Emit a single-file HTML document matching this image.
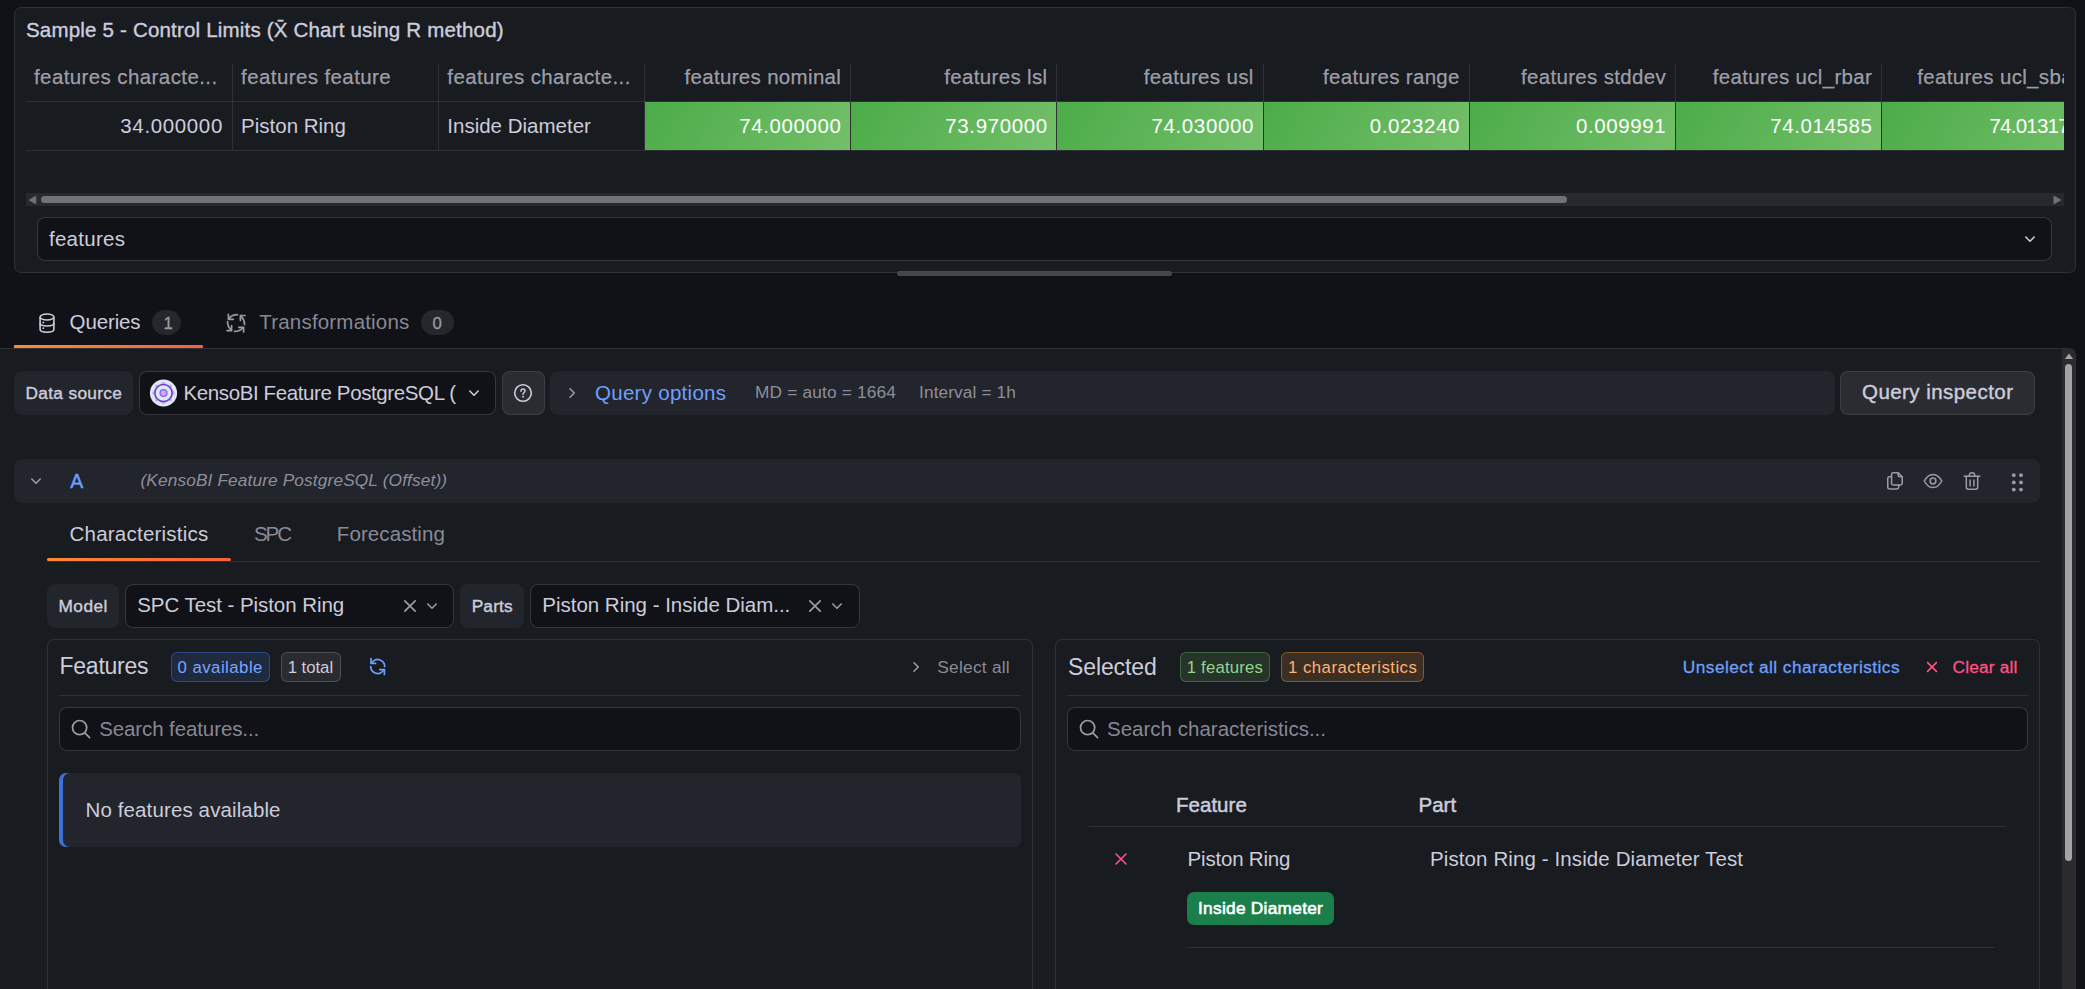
<!DOCTYPE html>
<html><head><meta charset="utf-8">
<style>
html,body{margin:0;padding:0;}
body{width:2085px;height:989px;overflow:hidden;background:#111217;position:relative;font-family:"Liberation Sans",sans-serif;}
.a{position:absolute;box-sizing:border-box;}
.t{position:absolute;white-space:nowrap;line-height:1;}
svg.a{overflow:visible;}
</style></head><body>
<div class="a" style="left:14px;top:7px;width:2062px;height:266px;background:#181b1f;box-shadow:inset 0 0 0 1px rgba(204,204,220,0.12);border-radius:7px;"></div>
<div class="t" style="top:20.00px;font-size:20.5px;color:#ccccdc;-webkit-text-stroke:0.4px #ccccdc;left:26.00px;letter-spacing:0.19px;">Sample 5 - Control Limits (X&#772; Chart using R method)</div>
<div class="a" style="left:26px;top:0px;width:2038px;height:160px;overflow:hidden">
<div class="a" style="left:0.00px;top:101px;width:2038.00px;height:1px;background:rgba(204,204,220,0.12);"></div>
<div class="a" style="left:0.00px;top:150px;width:2038.00px;height:1px;background:rgba(204,204,220,0.12);"></div>
<div class="a" style="left:619.00px;top:102px;width:205.00px;height:48px;background:linear-gradient(120deg,#4cac49,#73bf69);"></div>
<div class="a" style="left:825.00px;top:102px;width:205.00px;height:48px;background:linear-gradient(120deg,#4cac49,#73bf69);"></div>
<div class="a" style="left:1031.00px;top:102px;width:206.00px;height:48px;background:linear-gradient(120deg,#4cac49,#73bf69);"></div>
<div class="a" style="left:1238.00px;top:102px;width:205.00px;height:48px;background:linear-gradient(120deg,#4cac49,#73bf69);"></div>
<div class="a" style="left:1444.00px;top:102px;width:205.00px;height:48px;background:linear-gradient(120deg,#4cac49,#73bf69);"></div>
<div class="a" style="left:1650.00px;top:102px;width:205.00px;height:48px;background:linear-gradient(120deg,#4cac49,#73bf69);"></div>
<div class="a" style="left:1856.00px;top:102px;width:216.00px;height:48px;background:linear-gradient(120deg,#4cac49,#73bf69);"></div>
<div class="a" style="left:206.00px;top:63.5px;width:1.00px;height:86.5px;background:rgba(204,204,220,0.12);"></div>
<div class="a" style="left:412.00px;top:63.5px;width:1.00px;height:86.5px;background:rgba(204,204,220,0.12);"></div>
<div class="a" style="left:618.00px;top:63.5px;width:1.00px;height:86.5px;background:rgba(204,204,220,0.12);"></div>
<div class="a" style="left:824.00px;top:63.5px;width:1.00px;height:86.5px;background:rgba(204,204,220,0.12);"></div>
<div class="a" style="left:1030.00px;top:63.5px;width:1.00px;height:86.5px;background:rgba(204,204,220,0.12);"></div>
<div class="a" style="left:1237.00px;top:63.5px;width:1.00px;height:86.5px;background:rgba(204,204,220,0.12);"></div>
<div class="a" style="left:1443.00px;top:63.5px;width:1.00px;height:86.5px;background:rgba(204,204,220,0.12);"></div>
<div class="a" style="left:1649.00px;top:63.5px;width:1.00px;height:86.5px;background:rgba(204,204,220,0.12);"></div>
<div class="a" style="left:1855.00px;top:63.5px;width:1.00px;height:86.5px;background:rgba(204,204,220,0.12);"></div>
<div class="t" style="top:67.00px;font-size:20.5px;color:rgba(204,204,220,0.72);-webkit-text-stroke:0.25px rgba(204,204,220,0.72);left:8.00px;letter-spacing:0.4px;">features characte...</div>
<div class="t" style="top:67.00px;font-size:20.5px;color:rgba(204,204,220,0.72);-webkit-text-stroke:0.25px rgba(204,204,220,0.72);left:215.10px;letter-spacing:0.4px;">features feature</div>
<div class="t" style="top:67.00px;font-size:20.5px;color:rgba(204,204,220,0.72);-webkit-text-stroke:0.25px rgba(204,204,220,0.72);left:421.30px;letter-spacing:0.4px;">features characte...</div>
<div class="t" style="top:67.00px;font-size:20.5px;color:rgba(204,204,220,0.72);letter-spacing:0.330px;-webkit-text-stroke:0.25px rgba(204,204,220,0.72);left:-184.77px;width:1000px;text-align:right;">features nominal</div>
<div class="t" style="top:67.00px;font-size:20.5px;color:rgba(204,204,220,0.72);letter-spacing:0.330px;-webkit-text-stroke:0.25px rgba(204,204,220,0.72);left:21.43px;width:1000px;text-align:right;">features lsl</div>
<div class="t" style="top:67.00px;font-size:20.5px;color:rgba(204,204,220,0.72);letter-spacing:0.330px;-webkit-text-stroke:0.25px rgba(204,204,220,0.72);left:227.63px;width:1000px;text-align:right;">features usl</div>
<div class="t" style="top:67.00px;font-size:20.5px;color:rgba(204,204,220,0.72);letter-spacing:0.330px;-webkit-text-stroke:0.25px rgba(204,204,220,0.72);left:433.83px;width:1000px;text-align:right;">features range</div>
<div class="t" style="top:67.00px;font-size:20.5px;color:rgba(204,204,220,0.72);letter-spacing:0.330px;-webkit-text-stroke:0.25px rgba(204,204,220,0.72);left:640.03px;width:1000px;text-align:right;">features stddev</div>
<div class="t" style="top:67.00px;font-size:20.5px;color:rgba(204,204,220,0.72);letter-spacing:0.330px;-webkit-text-stroke:0.25px rgba(204,204,220,0.72);left:846.23px;width:1000px;text-align:right;">features ucl_rbar</div>
<div class="t" style="top:67.00px;font-size:20.5px;color:rgba(204,204,220,0.72);-webkit-text-stroke:0.25px rgba(204,204,220,0.72);left:1891.20px;letter-spacing:0.33px;">features ucl_sbar</div>
<div class="t" style="top:116.00px;font-size:20.5px;color:#ccccdc;letter-spacing:0.637px;left:-803.06px;width:1000px;text-align:right;">34.000000</div>
<div class="t" style="top:116.00px;font-size:20.5px;color:#ccccdc;left:215.10px;">Piston Ring</div>
<div class="t" style="top:116.00px;font-size:20.5px;color:#ccccdc;left:421.30px;">Inside Diameter</div>
<div class="t" style="top:116.00px;font-size:20.5px;color:#ffffff;letter-spacing:0.606px;left:-184.49px;width:1000px;text-align:right;">74.000000</div>
<div class="t" style="top:116.00px;font-size:20.5px;color:#ffffff;letter-spacing:0.606px;left:21.71px;width:1000px;text-align:right;">73.970000</div>
<div class="t" style="top:116.00px;font-size:20.5px;color:#ffffff;letter-spacing:0.606px;left:227.91px;width:1000px;text-align:right;">74.030000</div>
<div class="t" style="top:116.00px;font-size:20.5px;color:#ffffff;letter-spacing:0.611px;left:434.11px;width:1000px;text-align:right;">0.023240</div>
<div class="t" style="top:116.00px;font-size:20.5px;color:#ffffff;letter-spacing:0.611px;left:640.31px;width:1000px;text-align:right;">0.009991</div>
<div class="t" style="top:116.00px;font-size:20.5px;color:#ffffff;letter-spacing:0.606px;left:846.51px;width:1000px;text-align:right;">74.014585</div>
<div class="t" style="top:116.00px;font-size:20.5px;color:#ffffff;left:1963.40px;letter-spacing:-0.75px;">74.013171</div>
</div>
<div class="a" style="left:26px;top:193px;width:2038px;height:13px;background:#26292d;"></div>
<svg class="a" style="left:28px;top:195px;" width="10" height="10" viewBox="0 0 10 10"><path d="M7.9 1 L7.9 9 L0.9 5 Z" fill="#717275" stroke="#717275" stroke-width="0.6" stroke-linejoin="round"/></svg>
<div class="a" style="left:41px;top:196px;width:1526px;height:7px;background:#717277;border-radius:4px;"></div>
<svg class="a" style="left:2052px;top:195px;" width="10" height="10" viewBox="0 0 10 10"><path d="M1.9 1 L1.9 9 L8.9 5 Z" fill="#717275" stroke="#717275" stroke-width="0.6" stroke-linejoin="round"/></svg>
<div class="a" style="left:37px;top:217px;width:2015px;height:44px;background:#111217;box-shadow:inset 0 0 0 1px rgba(204,204,220,0.20);border-radius:8px;"></div>
<div class="t" style="top:229.00px;font-size:20.5px;color:#ccccdc;letter-spacing:0.262px;left:49.00px;">features</div>
<svg class="a" style="left:2023px;top:232px;" width="14" height="14" viewBox="0 0 14 14"><path d="M2.8 5 L7 9.2 L11.2 5" fill="none" stroke="#ccccdc" stroke-width="1.6" stroke-linecap="round" stroke-linejoin="round"/></svg>
<div class="a" style="left:897px;top:271px;width:275px;height:5px;background:#45474d;border-radius:3px;"></div>
<svg class="a" style="left:38px;top:312px;" width="18" height="22" viewBox="0 0 18 22"><g fill="none" stroke="#ccccdc" stroke-width="1.6"><ellipse cx="9" cy="5" rx="6.9" ry="3"/><path d="M2.1 5 V17.2 C2.1 18.9 5.2 20.2 9 20.2 C12.8 20.2 15.9 18.9 15.9 17.2 V5"/><path d="M2.1 11 C2.1 12.7 5.2 14 9 14 C12.8 14 15.9 12.7 15.9 11"/></g><circle cx="5.3" cy="10.5" r="0.9" fill="#ccccdc"/><circle cx="5.3" cy="16.2" r="0.9" fill="#ccccdc"/></svg>
<div class="t" style="top:312.00px;font-size:20.5px;color:#ccccdc;letter-spacing:-0.128px;left:69.60px;">Queries</div>
<div class="a" style="left:152px;top:310px;width:29px;height:25px;background:#25272c;border-radius:13px;"></div>
<div class="t" style="top:316.00px;font-size:16.8px;color:#9a9ba6;-webkit-text-stroke:0.3px #9a9ba6;left:163.50px;">1</div>
<svg class="a" style="left:221px;top:308px;" width="30" height="30" viewBox="0 0 30 30"><g fill="none" stroke="#9a9ba6" stroke-width="1.7" stroke-linecap="round" stroke-linejoin="round"><path d="M16.5 6.6 Q11 6.6 8.2 10.3"/><path d="M7.4 6.4 V11.3 H12.3"/><path d="M23.5 16.4 Q23.5 11 19.8 8.2"/><path d="M24 7.5 H19.4 V12.4"/><path d="M13.5 23.4 Q19 23.4 21.8 19.7"/><path d="M17.7 19.4 H22.6 V24"/><path d="M6.5 13.6 Q6.5 19 10.2 21.8"/><path d="M6 22.6 H10.6 V17.6"/></g></svg>
<div class="t" style="top:312.00px;font-size:20.5px;color:rgba(204,204,220,0.65);letter-spacing:0.189px;left:259.30px;">Transformations</div>
<div class="a" style="left:421px;top:310px;width:33px;height:25px;background:#25272c;border-radius:13px;"></div>
<div class="t" style="top:316.00px;font-size:16.8px;color:#9a9ba6;-webkit-text-stroke:0.3px #9a9ba6;left:432.50px;">0</div>
<div class="a" style="left:14px;top:345px;width:189px;height:3px;background:linear-gradient(90deg,#ff8a30,#f5603e);border-radius:2px;"></div>
<div class="a" style="left:0;top:348px;width:2076px;height:660px;background:#181b1f;border-top:1px solid rgba(204,204,220,0.12);border-right:1px solid rgba(204,204,220,0.12);border-top-right-radius:7px;overflow:hidden"><div class="a" style="left:2062px;top:0;width:14px;height:660px;background:#2b2b2c"></div></div>
<svg class="a" style="left:2063px;top:351px;" width="12" height="10" viewBox="0 0 12 10"><path d="M1.8 8 L6 2.5 L10.2 8 Z" fill="#a3a3a3"/></svg>
<div class="a" style="left:2065px;top:364px;width:7px;height:497px;background:#a3a3a3;border-radius:4px;"></div>
<div class="a" style="left:14px;top:345px;width:189px;height:3px;background:linear-gradient(90deg,#ff8a30,#f5603e);border-radius:2px;"></div>
<div class="a" style="left:14px;top:371px;width:119px;height:44px;background:#22252b;border-radius:8px;"></div>
<div class="t" style="top:385.00px;font-size:17.3px;color:#ccccdc;letter-spacing:0.322px;-webkit-text-stroke:0.4px #ccccdc;left:25.50px;">Data source</div>
<div class="a" style="left:139px;top:371px;width:357px;height:44px;background:#111217;box-shadow:inset 0 0 0 1px rgba(204,204,220,0.20);border-radius:8px;"></div>
<svg class="a" style="left:149px;top:378px;" width="29" height="30" viewBox="0 0 29 30"><circle cx="14.5" cy="15" r="13.6" fill="#dde8f8"/><path d="M14.5 3.4 L18.6 6.9 L22.7 6.8 L22.6 11 L26.1 15 L22.6 19 L22.7 23.2 L18.6 23.1 L14.5 26.6 L10.4 23.1 L6.3 23.2 L6.4 19 L2.9 15 L6.4 11 L6.3 6.8 L10.4 6.9 Z" fill="#cfa6f7"/><circle cx="14.5" cy="15" r="8.2" fill="#dde8f8"/><circle cx="14.5" cy="15" r="8.6" fill="none" stroke="#6d3fc6" stroke-width="1.5"/><circle cx="14.5" cy="15" r="3.4" fill="#e59cf3" stroke="#7a6cf0" stroke-width="1.4"/></svg>
<div class="t" style="top:383.00px;font-size:20.5px;color:#ccccdc;letter-spacing:-0.387px;left:183.50px;">KensoBI Feature PostgreSQL (</div>
<svg class="a" style="left:467px;top:386px;" width="14" height="14" viewBox="0 0 14 14"><path d="M2.8 5 L7 9.2 L11.2 5" fill="none" stroke="#ccccdc" stroke-width="1.6" stroke-linecap="round" stroke-linejoin="round"/></svg>
<div class="a" style="left:502px;top:371px;width:43px;height:44px;background:#2a2c31;box-shadow:inset 0 0 0 1px rgba(204,204,220,0.12);border-radius:8px;"></div>
<svg class="a" style="left:513px;top:383px;" width="20" height="20" viewBox="0 0 20 20"><circle cx="10" cy="10" r="8.3" fill="none" stroke="#ccccdc" stroke-width="1.6"/><path d="M8 8.2 C8 6.9 8.9 6.1 10 6.1 C11.2 6.1 12 6.9 12 8 C12 9.4 10 9.6 10 11.3" fill="none" stroke="#ccccdc" stroke-width="1.5" stroke-linecap="round"/><circle cx="10" cy="13.8" r="0.95" fill="#ccccdc"/></svg>
<div class="a" style="left:550px;top:371px;width:1285px;height:44px;background:#22252b;border-radius:8px;"></div>
<svg class="a" style="left:565px;top:386px;" width="14" height="14" viewBox="0 0 14 14"><path d="M5 2.8 L9.2 7 L5 11.2" fill="none" stroke="#9a9ba6" stroke-width="1.6" stroke-linecap="round" stroke-linejoin="round"/></svg>
<div class="t" style="top:383.00px;font-size:20.5px;color:#6e9fff;letter-spacing:0.281px;left:595.00px;">Query options</div>
<div class="t" style="top:384.00px;font-size:17.3px;color:rgba(204,204,220,0.65);letter-spacing:0.168px;left:755.00px;">MD = auto = 1664</div>
<div class="t" style="top:384.00px;font-size:17.3px;color:rgba(204,204,220,0.65);letter-spacing:0.109px;left:919.00px;">Interval = 1h</div>
<div class="a" style="left:1840px;top:371px;width:195px;height:44px;background:#2a2c31;box-shadow:inset 0 0 0 1px rgba(204,204,220,0.12);border-radius:8px;"></div>
<div class="t" style="top:382.00px;font-size:20.5px;color:#ccccdc;letter-spacing:0.449px;-webkit-text-stroke:0.4px #ccccdc;left:1862.00px;">Query inspector</div>
<div class="a" style="left:14px;top:459px;width:2026px;height:44px;background:#22252b;border-radius:8px;"></div>
<svg class="a" style="left:29px;top:474px;" width="14" height="14" viewBox="0 0 14 14"><path d="M2.8 5 L7 9.2 L11.2 5" fill="none" stroke="#9a9ba6" stroke-width="1.6" stroke-linecap="round" stroke-linejoin="round"/></svg>
<div class="t" style="top:472.00px;font-size:19.5px;color:#6e9fff;-webkit-text-stroke:0.45px #6e9fff;left:70.20px;">A</div>
<div class="t" style="top:472.00px;font-size:17.3px;color:rgba(204,204,220,0.65);letter-spacing:0.123px;font-style:italic;left:140.40px;">(KensoBI Feature PostgreSQL (Offset))</div>
<svg class="a" style="left:1884px;top:470px;" width="22" height="22" viewBox="0 0 22 22"><g fill="none" stroke="#9a9ba6" stroke-width="1.5" stroke-linejoin="round" stroke-linecap="round"><path d="M9.2 2.75 H14.2 L18.25 6.8 V13.3 C18.25 14.2 17.5 14.95 16.6 14.95 H9.2 C8.3 14.95 7.55 14.2 7.55 13.3 V4.4 C7.55 3.5 8.3 2.75 9.2 2.75 Z"/><path d="M14.2 2.9 V5.3 C14.2 6.1 14.9 6.8 15.7 6.8 H18.1"/><path d="M7.55 6.75 H5.4 C4.5 6.75 3.75 7.5 3.75 8.4 V17.3 C3.75 18.2 4.5 18.95 5.4 18.95 H13 C13.9 18.95 14.65 18.2 14.65 17.3 V14.95"/></g></svg>
<svg class="a" style="left:1922px;top:470px;" width="22" height="22" viewBox="0 0 22 22"><g fill="none" stroke="#9a9ba6" stroke-width="1.5"><path d="M2.3 11 C4.6 6.6 7.6 4.4 11 4.4 C14.4 4.4 17.4 6.6 19.7 11 C17.4 15.4 14.4 17.6 11 17.6 C7.6 17.6 4.6 15.4 2.3 11 Z"/><circle cx="11" cy="11" r="2.9"/></g></svg>
<svg class="a" style="left:1961px;top:469px;" width="22" height="22" viewBox="0 0 22 22"><g fill="none" stroke="#9a9ba6" stroke-width="1.5" stroke-linecap="round" stroke-linejoin="round"><path d="M3.2 7.3 H18.8"/><path d="M8.3 7.3 V6.1 C8.3 4.7 9.5 3.8 11 3.8 C12.5 3.8 13.7 4.7 13.7 6.1 V7.3"/><path d="M5.3 7.3 V18.1 C5.3 19.4 6.1 20.2 7.3 20.2 H14.7 C15.9 20.2 16.7 19.4 16.7 18.1 V7.3"/><path d="M9.1 11 V17"/><path d="M12.9 11 V17"/></g></svg>
<svg class="a" style="left:2009px;top:471px;" width="18" height="22" viewBox="0 0 18 22"><g fill="#9a9ba6"><circle cx="4.8" cy="4.2" r="1.9"/><circle cx="12" cy="4.2" r="1.9"/><circle cx="4.8" cy="11.4" r="1.9"/><circle cx="12" cy="11.4" r="1.9"/><circle cx="4.8" cy="18.6" r="1.9"/><circle cx="12" cy="18.6" r="1.9"/></g></svg>
<div class="t" style="top:524.00px;font-size:20.5px;color:#ccccdc;letter-spacing:0.231px;left:69.50px;">Characteristics</div>
<div class="t" style="top:524.00px;font-size:20.5px;color:rgba(204,204,220,0.65);letter-spacing:-2.074px;left:254.00px;">SPC</div>
<div class="t" style="top:524.00px;font-size:20.5px;color:rgba(204,204,220,0.65);letter-spacing:0.089px;left:336.80px;">Forecasting</div>
<div class="a" style="left:47px;top:561px;width:1993px;height:1px;background:rgba(204,204,220,0.12);"></div>
<div class="a" style="left:47px;top:558px;width:184px;height:3px;background:linear-gradient(90deg,#ff8a30,#f5603e);border-radius:2px;"></div>
<div class="a" style="left:47px;top:584px;width:72px;height:44px;background:#22252b;border-radius:8px;"></div>
<div class="t" style="top:598.00px;font-size:17.3px;color:#ccccdc;letter-spacing:0.469px;-webkit-text-stroke:0.4px #ccccdc;left:58.50px;">Model</div>
<div class="a" style="left:125px;top:584px;width:329px;height:44px;background:#111217;box-shadow:inset 0 0 0 1px rgba(204,204,220,0.20);border-radius:8px;"></div>
<div class="t" style="top:595.00px;font-size:20.5px;color:#ccccdc;letter-spacing:-0.053px;left:137.20px;">SPC Test - Piston Ring</div>
<svg class="a" style="left:402px;top:598px;" width="16" height="16" viewBox="0 0 16 16"><path d="M2.8 2.8 L13.2 13.2 M13.2 2.8 L2.8 13.2" stroke="#9a9ba6" stroke-width="1.7" stroke-linecap="round"/></svg>
<svg class="a" style="left:425px;top:599px;" width="14" height="14" viewBox="0 0 14 14"><path d="M2.8 5 L7 9.2 L11.2 5" fill="none" stroke="#9a9ba6" stroke-width="1.6" stroke-linecap="round" stroke-linejoin="round"/></svg>
<div class="a" style="left:460px;top:584px;width:64px;height:44px;background:#22252b;border-radius:8px;"></div>
<div class="t" style="top:598.00px;font-size:17.3px;color:#ccccdc;letter-spacing:0.155px;-webkit-text-stroke:0.4px #ccccdc;left:471.70px;">Parts</div>
<div class="a" style="left:530px;top:584px;width:330px;height:44px;background:#111217;box-shadow:inset 0 0 0 1px rgba(204,204,220,0.20);border-radius:8px;"></div>
<div class="t" style="top:595.00px;font-size:20.5px;color:#ccccdc;letter-spacing:-0.014px;left:542.30px;">Piston Ring - Inside Diam...</div>
<svg class="a" style="left:807px;top:598px;" width="16" height="16" viewBox="0 0 16 16"><path d="M2.8 2.8 L13.2 13.2 M13.2 2.8 L2.8 13.2" stroke="#9a9ba6" stroke-width="1.7" stroke-linecap="round"/></svg>
<svg class="a" style="left:830px;top:599px;" width="14" height="14" viewBox="0 0 14 14"><path d="M2.8 5 L7 9.2 L11.2 5" fill="none" stroke="#9a9ba6" stroke-width="1.6" stroke-linecap="round" stroke-linejoin="round"/></svg>
<div class="a" style="left:47px;top:639px;width:986px;height:361px;background:#181b1f;box-shadow:inset 0 0 0 1px rgba(204,204,220,0.12);border-radius:7px;"></div>
<div class="t" style="top:655.00px;font-size:23.0px;color:#ccccdc;letter-spacing:-0.251px;left:59.50px;">Features</div>
<div class="a" style="left:171px;top:652px;width:99px;height:30px;background:#1f2a3e;box-shadow:inset 0 0 0 1px rgba(61,113,217,0.45);border-radius:6px;"></div>
<div class="t" style="top:660.00px;font-size:16.8px;color:#7aa6ff;letter-spacing:0.468px;left:177.50px;">0 available</div>
<div class="a" style="left:281px;top:652px;width:60px;height:30px;background:#2a2b2f;box-shadow:inset 0 0 0 1px rgba(204,204,220,0.22);border-radius:6px;"></div>
<div class="t" style="top:660.00px;font-size:16.8px;color:#ccccdc;letter-spacing:-0.044px;left:287.70px;">1 total</div>
<svg class="a" style="left:364px;top:652px;" width="28" height="28" viewBox="0 0 28 28"><g fill="none" stroke="#6e9fff" stroke-width="1.7" stroke-linecap="round" stroke-linejoin="round"><path d="M20.7 14.5 A7 7 0 0 0 8.4 10"/><path d="M7 6.6 V11.4 H11.6"/><path d="M6.7 14.5 A7 7 0 0 0 19 19"/><path d="M20.4 22.4 V17.6 H15.8"/></g></svg>
<svg class="a" style="left:909px;top:660px;" width="14" height="14" viewBox="0 0 14 14"><path d="M5 2.8 L9.2 7 L5 11.2" fill="none" stroke="#9a9ba6" stroke-width="1.6" stroke-linecap="round" stroke-linejoin="round"/></svg>
<div class="t" style="top:659.00px;font-size:17.3px;color:rgba(204,204,220,0.65);letter-spacing:0.255px;left:937.30px;">Select all</div>
<div class="a" style="left:59px;top:695px;width:962px;height:1px;background:rgba(204,204,220,0.12);"></div>
<div class="a" style="left:59px;top:707px;width:962px;height:44px;background:#111217;box-shadow:inset 0 0 0 1px rgba(204,204,220,0.20);border-radius:8px;"></div>
<svg class="a" style="left:70px;top:718px;" width="22" height="22" viewBox="0 0 22 22"><g fill="none" stroke="#9a9ba6" stroke-width="1.7" stroke-linecap="round"><circle cx="9.6" cy="9.6" r="7.1"/><path d="M14.8 14.8 L19.6 19.6"/></g></svg>
<div class="t" style="top:719.00px;font-size:20.5px;color:rgba(204,204,220,0.65);letter-spacing:-0.106px;left:99.20px;">Search features...</div>
<div class="a" style="left:59px;top:773px;width:962px;height:74px;background:#22252b;border-radius:7px;box-shadow:inset 4px 0 0 #3d71d9;"></div>
<div class="t" style="top:800.00px;font-size:20.5px;color:#ccccdc;letter-spacing:0.120px;left:85.50px;">No features available</div>
<div class="a" style="left:1055px;top:639px;width:985px;height:361px;background:#181b1f;box-shadow:inset 0 0 0 1px rgba(204,204,220,0.12);border-radius:7px;"></div>
<div class="t" style="top:656.00px;font-size:23.0px;color:#ccccdc;letter-spacing:-0.117px;left:1068.00px;">Selected</div>
<div class="a" style="left:1180px;top:652px;width:90px;height:30px;background:#26342a;box-shadow:inset 0 0 0 1px rgba(115,191,105,0.35);border-radius:6px;"></div>
<div class="t" style="top:660.00px;font-size:16.8px;color:#93d58c;letter-spacing:0.177px;left:1186.70px;">1 features</div>
<div class="a" style="left:1281px;top:652px;width:143px;height:30px;background:#3b2e22;box-shadow:inset 0 0 0 1px rgba(255,152,48,0.4);border-radius:6px;"></div>
<div class="t" style="top:660.00px;font-size:16.8px;color:#ffb375;letter-spacing:0.476px;left:1288.00px;">1 characteristics</div>
<div class="t" style="top:659.00px;font-size:17.3px;color:#6e9fff;letter-spacing:0.453px;-webkit-text-stroke:0.3px #6e9fff;left:1682.80px;">Unselect all characteristics</div>
<svg class="a" style="left:1924px;top:659px;" width="16" height="16" viewBox="0 0 16 16"><path d="M3.6 3.6 L12.4 12.4 M12.4 3.6 L3.6 12.4" stroke="#ff5286" stroke-width="1.6" stroke-linecap="round"/></svg>
<div class="t" style="top:659.00px;font-size:17.3px;color:#ff5286;letter-spacing:0.193px;-webkit-text-stroke:0.3px #ff5286;left:1952.50px;">Clear all</div>
<div class="a" style="left:1067px;top:695px;width:961px;height:1px;background:rgba(204,204,220,0.12);"></div>
<div class="a" style="left:1067px;top:707px;width:961px;height:44px;background:#111217;box-shadow:inset 0 0 0 1px rgba(204,204,220,0.20);border-radius:8px;"></div>
<svg class="a" style="left:1078px;top:718px;" width="22" height="22" viewBox="0 0 22 22"><g fill="none" stroke="#9a9ba6" stroke-width="1.7" stroke-linecap="round"><circle cx="9.6" cy="9.6" r="7.1"/><path d="M14.8 14.8 L19.6 19.6"/></g></svg>
<div class="t" style="top:719.00px;font-size:20.5px;color:rgba(204,204,220,0.65);letter-spacing:0.011px;left:1107.00px;">Search characteristics...</div>
<div class="t" style="top:795.00px;font-size:20.5px;color:#ccccdc;letter-spacing:0.026px;-webkit-text-stroke:0.5px #ccccdc;left:1176.00px;">Feature</div>
<div class="t" style="top:795.00px;font-size:20.5px;color:#ccccdc;-webkit-text-stroke:0.5px #ccccdc;left:1418.50px;">Part</div>
<div class="a" style="left:1089px;top:826px;width:917px;height:1px;background:rgba(204,204,220,0.12);"></div>
<svg class="a" style="left:1113px;top:851px;" width="16" height="16" viewBox="0 0 16 16"><path d="M3 3 L13 13 M13 3 L3 13" stroke="#ff5286" stroke-width="1.6" stroke-linecap="round"/></svg>
<div class="t" style="top:849.00px;font-size:20.5px;color:#ccccdc;letter-spacing:-0.204px;left:1187.60px;">Piston Ring</div>
<div class="t" style="top:849.00px;font-size:20.5px;color:#ccccdc;letter-spacing:0.105px;left:1430.00px;">Piston Ring - Inside Diameter Test</div>
<div class="a" style="left:1187px;top:892px;width:147px;height:33px;background:#1a7f4b;border-radius:7px;"></div>
<div class="t" style="top:900.00px;font-size:17.3px;color:#ffffff;letter-spacing:0.275px;-webkit-text-stroke:0.6px #ffffff;left:1198.00px;">Inside Diameter</div>
<div class="a" style="left:1187px;top:947px;width:808px;height:1px;background:rgba(204,204,220,0.12);"></div>
</body></html>
